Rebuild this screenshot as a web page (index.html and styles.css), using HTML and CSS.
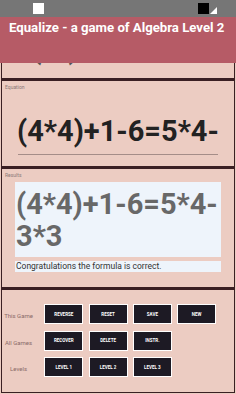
FILE: index.html
```html
<!DOCTYPE html>
<html>
<head>
<meta charset="utf-8">
<link rel="stylesheet" href="styles.css">
</head>
<body>
<div class="status">
  <span class="sq-white"></span>
  <span class="right-icons"><span class="sq-black"></span><svg class="tri" width="7" height="7" viewBox="0 0 7 7"><polygon points="7,0 7,7 0,7" fill="#fff"/></svg></span>
</div>
<div class="titlebar">Equalize - a game of Algebra Level 2</div>
<div class="panel p-top"><div class="ghost">(4)</div></div>
<div class="panel p-eq">
  <div class="label">Equation</div>
  <div class="eq">(4*4)+1-6=5*4-</div>
  <div class="rule"></div>
</div>
<div class="panel p-res">
  <div class="label">Results</div>
  <div class="resbox">(4*4)+1-6=5*4-<br>3*3</div>
  <div class="msg">Congratulations the formula is correct.</div>
</div>
<div class="panel p-btns">
  <div class="grid">
    <div class="rl">This Game</div>
    <div class="btn">REVERSE</div><div class="btn">RESET</div><div class="btn">SAVE</div><div class="btn">NEW</div>
    <div class="rl">All Games</div>
    <div class="btn">RECOVER</div><div class="btn">DELETE</div><div class="btn">INSTR.</div><div></div>
    <div class="rl">Levels</div>
    <div class="btn">LEVEL 1</div><div class="btn">LEVEL 2</div><div class="btn">LEVEL 3</div><div></div>
  </div>
</div>
</body>
</html>
```
FILE: styles.css
```css
html, body { margin: 0; padding: 0; }
body {
  width: 236px; height: 394px; overflow: hidden;
  background: #ecccc2;
  font-family: Roboto, "Liberation Sans", sans-serif;
}
.status {
  height: 17px; background: #767676;
  display: flex; align-items: center; justify-content: space-between;
  padding: 0 19px 0 33px;
}
.sq-white { width: 11px; height: 11px; background: #fff; display: block; }
.right-icons { display: flex; align-items: flex-end; }
.sq-black { width: 11px; height: 11px; background: #000; display: block; }
.tri { display: block; margin-left: 1px; }
.titlebar {
  height: 46px; box-sizing: border-box; background: #b65b66;
  color: #fff; font-weight: bold; font-size: 13.2px; white-space: nowrap;
  padding: 3px 0 0 9px; line-height: 15px; overflow: hidden;
}
.panel {
  border: 1px solid #3a1f23;
  margin: 0 1px; box-sizing: border-box;
  overflow: hidden;
}
.p-top { height: 16px; border-top: none; }
.ghost {
  font-size: 40px; color: #555; margin-top: -44px; margin-left: 26px;
  letter-spacing: 2px; line-height: 48px;
}
.p-eq { height: 88px; border-top-width: 2px; }
.label { font-size: 5px; color: #8b7a78; padding: 3px 0 0 3px; line-height: 6px; }
.eq {
  font-size: 29px; font-weight: bold; color: #222;
  text-align: center; margin-top: 24px; line-height: 34px; white-space: nowrap;
}
.rule { height: 1px; background: #a58d88; margin: 6px 16px 0 16px; }
.p-res { height: 121px; border-top-width: 2px; }
.resbox {
  background: #eef4fb; margin: 4px 13px 0 13px; height: 75px;
  font-size: 29px; font-weight: bold; color: #686868; line-height: 32px;
  padding: 6px 0 0 1px; box-sizing: border-box; white-space: nowrap;
}
.msg {
  background: #eef4fb; margin: 4px 13px 0 13px; height: 11px;
  font-size: 8.5px; color: #333; line-height: 11px; padding-left: 1px;
}
.p-btns { height: 105px; border-top-width: 2px; }
.grid {
  display: grid; grid-template-columns: 37px repeat(4, 39px);
  column-gap: 5.3px; row-gap: 6.5px; grid-auto-rows: 20px;
  padding: 14px 0 0 0;
}
.rl { font-size: 6px; color: #8a6b68; display: flex; align-items: center; justify-content: center; padding: 3px 4px 0 0; }
.btn {
  background: #1d1a24; border: 1px solid #fff; box-sizing: border-box;
  color: #fff; font-size: 4.5px; font-weight: bold;
  display: flex; align-items: center; justify-content: center;
}
```
